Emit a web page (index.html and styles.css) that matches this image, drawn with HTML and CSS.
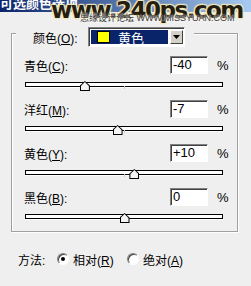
FILE: index.html
```html
<!DOCTYPE html>
<html lang="zh">
<head>
  <meta charset="UTF-8">
  <title>可选颜色选项</title>
  <link rel="stylesheet" href="styles.css">
</head>
<body>

  <div class="win">
    <div class="titlebar"><span class="title">可选颜色选项</span></div>

    <div class="group">
      <div class="legend">
        <span class="lbl">颜色(<u>O</u>):</span>
        <div class="combo">
          <div class="combo-sel"><span class="swatch"></span>黄色</div>
          <div class="combo-btn">
            <svg width="7" height="4" viewBox="0 0 7 4"><path d="M0 0h7L3.5 4z" fill="#000"/></svg>
          </div>
        </div>
      </div>

      <div class="field">
        <div class="row"><span class="name">青色(<u>C</u>):</span><span class="num">-40</span><span class="pct">%</span></div>
        <div class="slider" style="--v:-40"><div class="track"></div><div class="tick"></div><div class="thumb"></div></div>
      </div>

      <div class="field">
        <div class="row"><span class="name">洋红(<u>M</u>):</span><span class="num">-7</span><span class="pct">%</span></div>
        <div class="slider" style="--v:-7"><div class="track"></div><div class="tick"></div><div class="thumb"></div></div>
      </div>

      <div class="field">
        <div class="row"><span class="name">黄色(<u>Y</u>):</span><span class="num">+10</span><span class="pct">%</span></div>
        <div class="slider" style="--v:10"><div class="track"></div><div class="tick"></div><div class="thumb"></div></div>
      </div>

      <div class="field">
        <div class="row"><span class="name">黑色(<u>B</u>):</span><span class="num">0</span><span class="pct">%</span></div>
        <div class="slider" style="--v:0"><div class="track"></div><div class="tick"></div><div class="thumb"></div></div>
      </div>
    </div>

    <div class="method">
      <span class="mlabel">方法:</span>
      <span class="radio on"></span><span class="opt">相对(<u>R</u>)</span>
      <span class="radio"></span><span class="opt">绝对(<u>A</u>)</span>
    </div>

    <!-- watermark over the title bar -->
    <div class="wm-big">www.240ps.com</div>
    <div class="wm-small">思缘设计论坛 WWW.MISSYUAN.COM</div>
  </div>

</body>
</html>
```

FILE: styles.css
```css
* {
  box-sizing: border-box;
  margin: 0;
  padding: 0;
}

body {
  background: #efefef;
  font-family: "Liberation Sans", "Noto Sans CJK SC", sans-serif;
  font-size: 12px;
  color: #000;
}

.win {
  position: relative;
  width: 251px;
  height: 286px;
  overflow: hidden;
}

.titlebar {
  height: 12px;
  overflow: hidden;
  background: linear-gradient(to right, #0a246a, #a6caf0);
}

.title {
  display: block;
  margin-top: -4px;
  color: #fff;
  font-weight: bold;
  font-size: 13px;
  line-height: 16px;
}

.group {
  margin: 21px 0 0 11px;
  width: 227px;
  height: 199px;
  border: 1px solid #a0a0a0;
  box-shadow: 1px 1px 0 #fff, inset 1px 1px 0 #fff;
}

.legend {
  display: flex;
  align-items: center;
  margin: -7px 0 0 4px;
  padding: 0 9px 0 17px;
  width: 178px;
  height: 20px;
  background: #efefef;
}

.lbl {
  width: 55px;
}

.combo {
  display: flex;
  width: 97px;
  height: 20px;
  padding: 2px 1px 2px 2px;
  background: #fff;
  border: 1px solid;
  border-color: #808080 #fff #fff #808080;
  box-shadow: inset 1px 1px 0 #404040;
}

.combo-sel {
  flex: 1;
  display: flex;
  align-items: center;
  background: #0a246a;
  color: #fff;
  font-size: 13px;
}

.swatch {
  width: 13px;
  height: 12px;
  margin: 0 8px 0 6px;
  background: #ffff00;
  border: 1px solid #000;
}

.combo-btn {
  width: 13px;
  display: flex;
  align-items: center;
  justify-content: center;
  background: #d4d0c8;
  border: 1px solid;
  border-color: #fff #404040 #404040 #fff;
  margin-left: 2px;
}

.field {
  padding-left: 12px;
}

.row {
  display: flex;
  align-items: center;
  height: 18px;
  margin-top: 9px;
}

.field:first-of-type .row {
  margin-top: 10px;
}

.name {
  width: 146px;
}

.num {
  width: 38px;
  height: 18px;
  padding-left: 2px;
  line-height: 16px;
  font-size: 13px;
  background: #fff;
  border: 1px solid;
  border-color: #808080 #fff #fff #808080;
  box-shadow: inset 1px 1px 0 #404040;
}

.pct {
  margin-left: 9px;
  font-size: 13px;
}

.slider {
  position: relative;
  width: 198px;
  height: 9px;
  margin: 8px 0 0 1px;
}

.track {
  margin-top: 3px;
  height: 5px;
  background: #fff;
  border: 1px solid #000;
  box-shadow: 0 1px 0 #fff;
}

.tick {
  position: absolute;
  left: 99px;
  top: 4px;
  width: 1px;
  height: 3px;
  background: #c8c8c8;
}

.thumb {
  position: absolute;
  top: -1px;
  left: calc(94.5px + var(--v) * 0.99px);
  width: 10px;
  height: 10px;
  background: #000;
  clip-path: polygon(50% 0, 100% 45%, 100% 100%, 0 100%, 0 45%);
}

.thumb::after {
  content: "";
  position: absolute;
  left: 1px;
  top: 1px;
  width: 8px;
  height: 8px;
  background: #f4f4f4;
  clip-path: polygon(50% 0, 100% 50%, 100% 100%, 0 100%, 0 50%);
}

.method {
  display: flex;
  align-items: center;
  height: 14px;
  margin: 20px 0 0 18px;
  font-size: 12px;
}

.mlabel {
  width: 39px;
}

.radio {
  position: relative;
  width: 12px;
  height: 12px;
  border-radius: 50%;
  background: #fff;
  border: 1px solid;
  border-color: #808080 #fff #fff #808080;
  box-shadow: inset 1px 1px 0 #404040;
}

.radio.on::after {
  content: "";
  position: absolute;
  left: 3px;
  top: 3px;
  width: 4px;
  height: 4px;
  border-radius: 50%;
  background: #000;
}

.opt {
  margin-left: 4px;
  width: 54px;
}

.wm-big {
  position: absolute;
  left: 51px;
  top: -3px;
  font-family: "DejaVu Sans", sans-serif;
  font-weight: bold;
  font-size: 23px;
  letter-spacing: -1.5px;
  color: #241d12;
  text-shadow: 0 0 2px #f3e7b8, 1px 1px 1px #f3e7b8, -1px -1px 1px #f3e7b8, 1px -1px 1px #f3e7b8, -1px 1px 1px #f3e7b8;
}

.wm-small {
  position: absolute;
  left: 80px;
  top: 11px;
  font-size: 9px;
  color: #333;
  text-shadow: 0 0 2px #fff, 0 0 1px #fff;
  white-space: nowrap;
}
```
